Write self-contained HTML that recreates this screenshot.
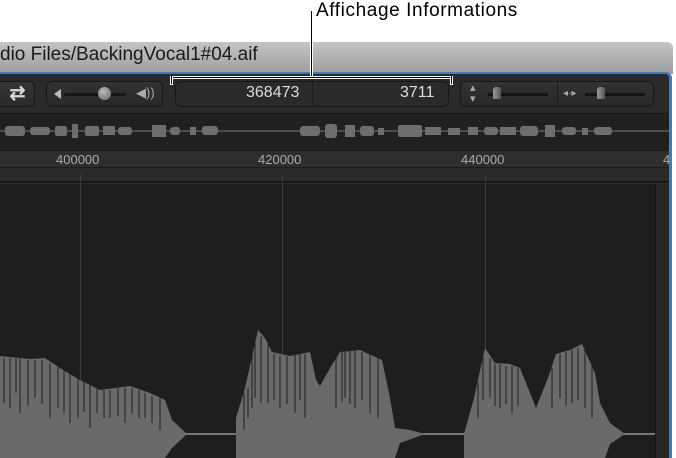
<!DOCTYPE html>
<html><head><meta charset="utf-8"><style>
*{margin:0;padding:0;box-sizing:border-box}
body{width:676px;height:458px;overflow:hidden;background:#fff;position:relative;font-family:"Liberation Sans",sans-serif}
.abs{position:absolute}
</style></head><body>
<div class="abs" style="left:316px;top:0px;font-size:19px;color:#000;letter-spacing:0.6px">Affichage Informations</div>
<div class="abs" style="left:0;top:42px;width:673px;height:32px;background:linear-gradient(#c4c4c4,#9e9e9e);border-top-right-radius:6px"></div>
<div class="abs" style="left:0;top:44px;font-size:19px;color:#1a1a1a">dio Files/BackingVocal1#04.aif</div>
<div class="abs" style="left:0;top:72px;width:672px;height:386px;background:#2a2a2a;border-top:2px solid #4a78b8;border-right:3px solid #4a78b8;border-top-right-radius:6px"></div>
<div class="abs" style="left:-8px;top:81px;width:43px;height:26px;border:1px solid #161616;border-radius:6px;background:linear-gradient(#353535,#2a2a2a);color:#d8d8d8;font-size:19px;text-align:center;line-height:24px;padding-left:8px;font-weight:bold">⇄</div>
<div class="abs" style="left:46px;top:81px;width:117px;height:26px;border:1px solid #161616;border-radius:6px;background:linear-gradient(#333,#282828)"></div>
<div class="abs" style="left:54px;top:89px;width:0;height:0;border-right:7px solid #bbb;border-top:5px solid transparent;border-bottom:5px solid transparent"></div>
<div class="abs" style="left:64px;top:93px;width:62px;height:3px;background:#151515;border-radius:2px"></div>
<div class="abs" style="left:98px;top:87px;width:13px;height:13px;border-radius:50%;background:radial-gradient(circle at 40% 35%,#bbb,#666)"></div>
<div class="abs" style="left:136px;top:85px;font-size:13px;color:#aaa">◀))</div>
<div class="abs" style="left:175px;top:81px;width:274px;height:26px;border:1px solid #161616;border-radius:6px;background:#2a2a2a"></div>
<div class="abs" style="left:312px;top:82px;width:1px;height:24px;background:#1a1a1a"></div>
<div class="abs" style="left:246px;top:84px;font-size:16px;color:#ddd">368473</div>
<div class="abs" style="left:400px;top:84px;font-size:16px;color:#ddd">3711</div>
<div class="abs" style="left:460px;top:81px;width:194px;height:26px;border:1px solid #161616;border-radius:6px;background:linear-gradient(#333,#282828)"></div>
<div class="abs" style="left:557px;top:82px;width:1px;height:24px;background:#1a1a1a"></div>
<div class="abs" style="left:470px;top:83px;font-size:11px;color:#aaa;line-height:11px">▴<br>▾</div>
<div class="abs" style="left:488px;top:93px;width:60px;height:3px;background:#151515"></div>
<div class="abs" style="left:493px;top:87px;width:8px;height:12px;background:linear-gradient(90deg,#999,#555);border-radius:3px 3px 1px 1px"></div>
<div class="abs" style="left:563px;top:88px;font-size:10px;color:#aaa">◂·▸</div>
<div class="abs" style="left:585px;top:93px;width:60px;height:3px;background:#151515"></div>
<div class="abs" style="left:597px;top:87px;width:8px;height:12px;background:linear-gradient(90deg,#999,#555);border-radius:3px 3px 1px 1px"></div>
<div class="abs" style="left:0;top:113px;width:669px;height:37px;background:#202020;border-top:1px solid #171717"></div>
<svg class="abs" style="left:0;top:113px" width="669" height="37">
<line x1="0" y1="18" x2="669" y2="18" stroke="#777" stroke-width="1"/>
<g fill="#6e6e6e">
<rect x="5" y="13" width="20" height="10" rx="3"/><rect x="30" y="14" width="20" height="8" rx="3"/><rect x="55" y="13" width="12" height="10" rx="2"/><rect x="72" y="11" width="6" height="14"/><rect x="85" y="13" width="14" height="10" rx="2"/><rect x="103" y="13" width="12" height="9"/><rect x="118" y="14" width="14" height="8" rx="3"/><rect x="152" y="12" width="14" height="12"/><rect x="170" y="14" width="10" height="8" rx="3"/><rect x="190" y="14" width="6" height="8"/><rect x="202" y="13" width="16" height="9" rx="3"/>
<rect x="300" y="13" width="20" height="10" rx="3"/><rect x="325" y="11" width="12" height="14" rx="3"/><rect x="345" y="12" width="10" height="12"/><rect x="360" y="13" width="14" height="10" rx="3"/><rect x="378" y="15" width="6" height="7"/><rect x="398" y="12" width="24" height="12" rx="2"/><rect x="425" y="14" width="16" height="8"/><rect x="448" y="15" width="12" height="7"/><rect x="468" y="14" width="10" height="8"/><rect x="484" y="14" width="14" height="8" rx="3"/><rect x="500" y="14" width="16" height="8"/><rect x="520" y="13" width="18" height="10" rx="3"/><rect x="545" y="12" width="10" height="12"/><rect x="562" y="14" width="14" height="8" rx="3"/><rect x="582" y="15" width="6" height="7"/><rect x="594" y="14" width="18" height="8" rx="3"/>
</g></svg>
<div class="abs" style="left:0;top:150px;width:669px;height:18px;background:#2e2e2e;border-top:1px solid #1c1c1c;border-bottom:1px solid #1c1c1c"></div>
<div class="abs" style="left:56px;top:152px;font-size:13px;color:#aaa">400000</div>
<div class="abs" style="left:258px;top:152px;font-size:13px;color:#aaa">420000</div>
<div class="abs" style="left:461px;top:152px;font-size:13px;color:#aaa">440000</div>
<div class="abs" style="left:663px;top:152px;font-size:13px;color:#aaa">4</div>
<div class="abs" style="left:0;top:168px;width:669px;height:15px;background:#2a2a2a;border-bottom:2px solid #151515"></div>
<div class="abs" style="left:0;top:184px;width:655px;height:274px;background:#1e1e1e"></div>
<div class="abs" style="left:655px;top:184px;width:14px;height:274px;background:#272727;border-left:1px solid #151515"></div>
<svg class="abs" style="left:0;top:168px" width="655" height="290">
<g stroke="#3c3c3c" stroke-width="1"><line x1="80.5" y1="6" x2="80.5" y2="290"/><line x1="282.5" y1="6" x2="282.5" y2="290"/><line x1="485.5" y1="6" x2="485.5" y2="290"/></g>
<line x1="0" y1="266" x2="655" y2="266" stroke="#777" stroke-width="2"/>
<g fill="#6a6a6a">
<path d="M0 188 L30 191 L45 190 L60 200 L80 212 L100 222 L115 220 L130 218 L150 225 L165 232 L172 252 L187 266 L172 280 L165 290 L0 290Z"/>
<path d="M236 290 L236 250 L245 220 L258 162 L265 170 L272 184 L290 188 L310 184 L316 212 L320 218 L330 200 L340 184 L360 182 L382 192 L390 230 L395 260 L410 262 L425 266 L400 275 L395 290Z"/>
<path d="M464 290 L464 266 L474 230 L485 180 L495 195 L510 196 L520 200 L530 225 L536 240 L548 210 L556 186 L570 182 L582 176 L595 205 L600 235 L610 255 L625 266 L610 276 L605 290Z"/>
</g>
<g stroke="#1e1e1e" stroke-width="1">
<path d="M4 190V235M10 190V240M16 190V225M20 190V245M28 192V238M35 192V230M42 192V236M50 195V250M58 198V240M64 200V245M70 205V255M78 210V250M84 212V244M90 215V260M97 218V245M104 222V250M110 222V250M118 220V248M125 220V255M132 220V246M139 222V250M145 225V250M152 228V255M160 230V262M244 225V262M248 220V250M252 180V240M255 175V230M261 168V235M268 175V235M274 186V232M280 188V240M287 188V236M295 186V245M300 186V232M305 186V250M336 190V240M342 184V234M345 182V230M350 182V236M355 182V240M362 184V232M370 186V245M378 190V250M478 215V250M483 190V232M490 190V230M495 196V238M500 196V240M506 198V236M512 198V245M518 200V238M552 200V240M560 186V230M566 184V238M572 182V235M578 180V232M585 180V240M592 195V250"/>
</g>
</svg>
<div class="abs" style="left:310px;top:11px;width:3px;height:67px;background:#000;border-left:1px solid #fff;border-right:1px solid #fff"></div>
<div class="abs" style="left:170px;top:76px;width:283px;height:3px;background:#000;border-top:1px solid #fff;border-bottom:1px solid #fff"></div>
<div class="abs" style="left:170px;top:76px;width:3px;height:9px;background:#000;border-left:1px solid #fff;border-right:1px solid #fff;border-bottom:1px solid #fff"></div>
<div class="abs" style="left:450px;top:76px;width:3px;height:9px;background:#000;border-left:1px solid #fff;border-right:1px solid #fff;border-bottom:1px solid #fff"></div>
</body></html>
